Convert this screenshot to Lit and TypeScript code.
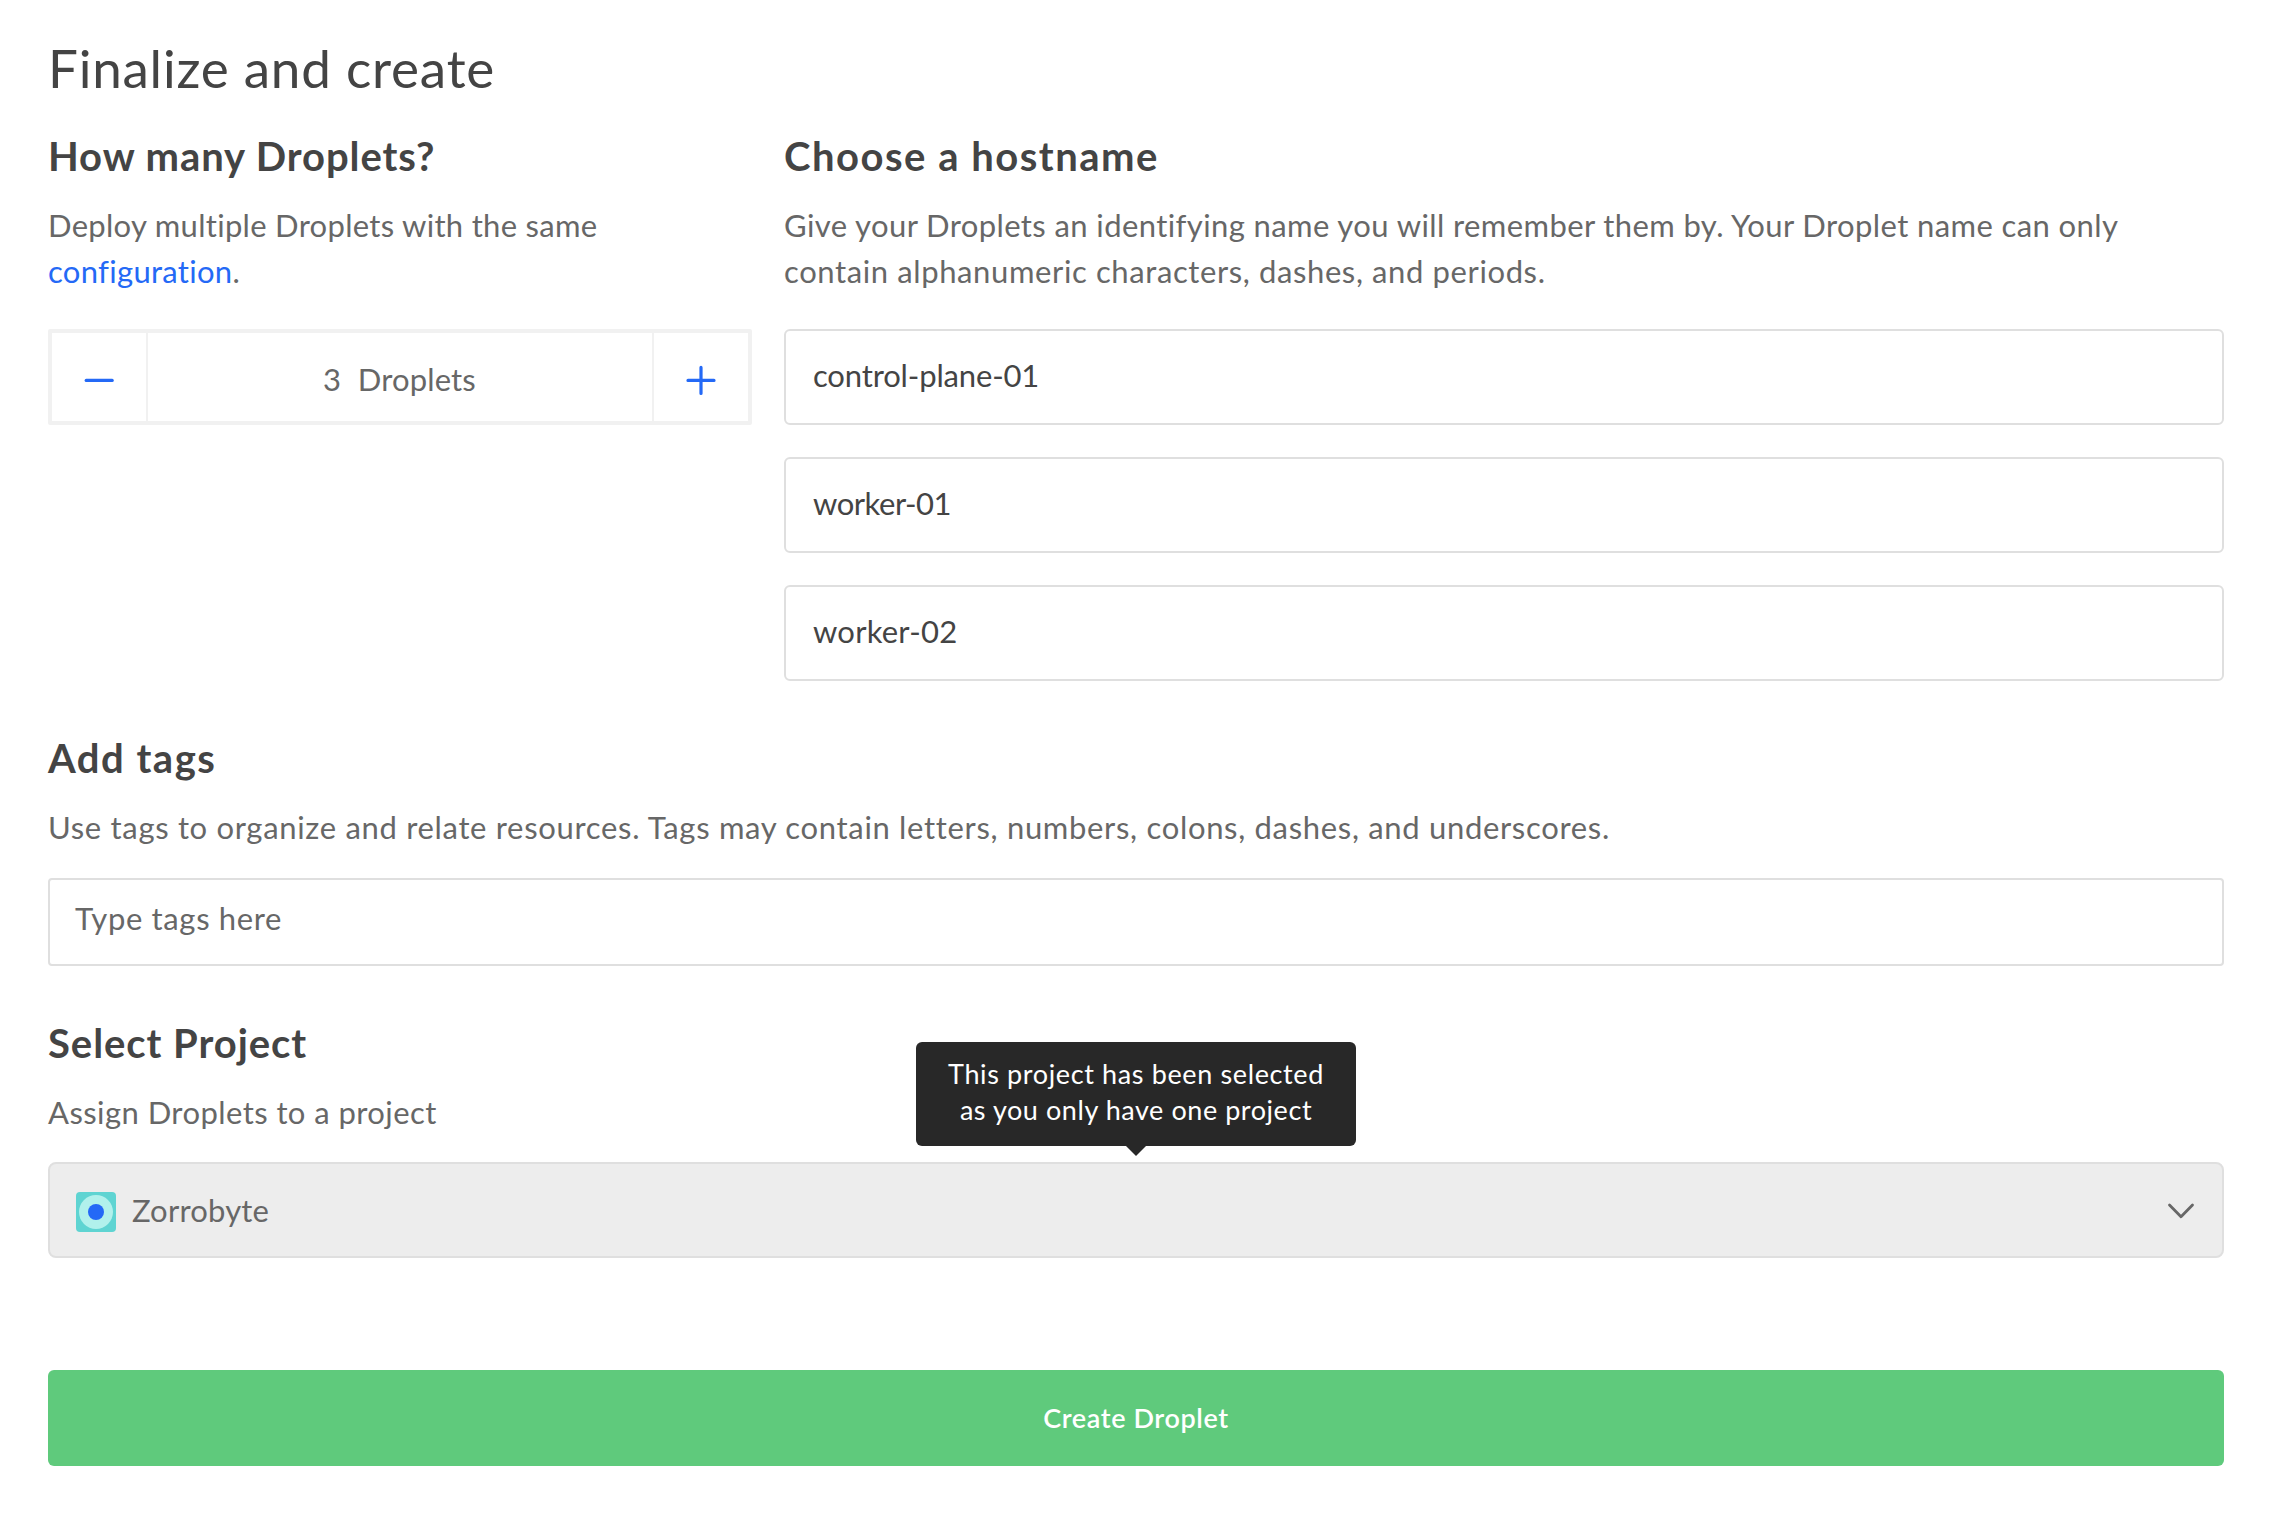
import { LitElement, html, css, svg } from "lit";
import { customElement, state } from "lit/decorators.js";

const minusIcon = svg`<path d="M2.2 15.4H28.2" />`;
const plusIcon = svg`<path d="M2 15.4H28M15 2.4V28.4" />`;

@customElement("app-root")
export class AppRoot extends LitElement {
  @state() private hostnames = ["control-plane-01", "worker-01", "worker-02"];

  static styles = css`
    :host {
      display: block;
      background: #fff;
      font-family: Lato, "Open Sans", sans-serif;
      font-size: 31px;
      line-height: 46px;
      color: #676767;
    }
    * {
      box-sizing: border-box;
    }
    .page {
      display: flex;
      flex-direction: column;
      min-height: 1534px;
      padding: 38px 66px 0 48px;
    }
    h1,
    h2,
    p {
      margin: 0;
      white-space: nowrap;
    }
    h1 {
      font-size: 53px;
      line-height: 60px;
      font-weight: 400;
      letter-spacing: 0.78px;
      color: #444;
    }
    h2 {
      font-size: 40px;
      line-height: 48px;
      font-weight: 700;
      letter-spacing: 0.92px;
      color: #444;
      margin-bottom: 22px;
    }
    .h-host {
      letter-spacing: 1.5px;
    }
    .h-tags {
      letter-spacing: 1.5px;
    }
    .h-project {
      letter-spacing: 0.95px;
    }
    .line {
      display: block;
    }
    .ls-deploy {
      letter-spacing: 0.3px;
    }
    .ls-give {
      letter-spacing: 0.4px;
    }
    .ls-contain {
      letter-spacing: 0.61px;
    }
    .ls-use {
      letter-spacing: 0.68px;
    }
    .ls-assign {
      letter-spacing: 0.43px;
    }
    a {
      color: #2469f6;
      text-decoration: none;
    }
    .columns {
      display: grid;
      grid-template-columns: 704px 1fr;
      gap: 32px;
      margin-top: 34px;
    }
    .stepper {
      display: grid;
      grid-template-columns: 94px 1fr 94px;
      height: 96px;
      margin-top: 35px;
      border: 4px solid #f1f1f1;
      border-radius: 2px;
    }
    .step {
      display: flex;
      align-items: center;
      justify-content: center;
      padding: 7px 0 0;
      margin: 0;
      border: 0;
      background: none;
      font: inherit;
    }
    .step svg {
      width: 31px;
      height: 32px;
      fill: none;
      stroke: #2469f6;
      stroke-width: 3.2;
      stroke-linecap: round;
    }
    .count {
      display: flex;
      align-items: center;
      justify-content: center;
      gap: 16.5px;
      padding: 3px 1px 0 0;
      border: solid #f1f1f1;
      border-width: 0 2px;
      letter-spacing: 0.15px;
    }
    .hosts {
      display: flex;
      flex-direction: column;
      gap: 32px;
      margin-top: 35px;
    }
    .field {
      display: flex;
      align-items: center;
      height: 96px;
      padding: 0 27px 4px;
      border: 2px solid #dfdfdf;
      border-radius: 6px;
      color: #444;
    }
    .host-0 {
      letter-spacing: -0.15px;
    }
    .host-1 {
      letter-spacing: -0.47px;
    }
    .host-2 {
      letter-spacing: 0.22px;
    }
    .section {
      margin-top: 53px;
    }
    .tags {
      height: 88px;
      margin-top: 28px;
      padding: 0 25px 8px;
      border-radius: 4px;
      color: #676767;
      letter-spacing: 0.65px;
    }
    .select {
      position: relative;
      margin-top: 27px;
      padding: 0 27px 0 26px;
      border-radius: 8px;
      background: #ededed;
      color: #676767;
      letter-spacing: 0.2px;
    }
    .avatar {
      width: 40px;
      height: 40px;
      margin: 4px 16px 0 0;
    }
    .chevron {
      width: 28px;
      height: 28px;
      margin: 2px 0 0 auto;
      fill: none;
      stroke: #676767;
      stroke-width: 2.8;
      stroke-linecap: round;
      stroke-linejoin: round;
    }
    .tooltip {
      position: absolute;
      top: -122px;
      left: calc(50% - 220px);
      width: 440px;
      height: 104px;
      padding-top: 14px;
      border-radius: 6px;
      background: #282828;
      color: #fff;
      font-size: 27px;
      line-height: 36px;
      text-align: center;
      white-space: nowrap;
    }
    .tooltip::after {
      content: "";
      position: absolute;
      top: 104px;
      left: 210px;
      border: 10px solid transparent;
      border-top-color: #282828;
      border-bottom: 0;
    }
    .tip-1 {
      letter-spacing: 0.63px;
    }
    .tip-2 {
      letter-spacing: 0.56px;
    }
    .create {
      height: 96px;
      margin: 112px 0 0;
      border: 0;
      border-radius: 6px;
      background: #5fca7c;
      color: #fff;
      font: 600 27px/36px Lato, "Open Sans", sans-serif;
      letter-spacing: 0.6px;
    }
  `;

  render() {
    return html`
      <main class="page">
        <h1>Finalize and create</h1>
        <div class="columns">
          <section>
            <h2>How many Droplets?</h2>
            <p>
              <span class="line ls-deploy">Deploy multiple Droplets with the same</span>
              <span class="line ls-deploy"><a>configuration</a>.</span>
            </p>
            <div class="stepper">
              <button class="step" aria-label="Remove">
                <svg viewBox="0 0 31 32">${minusIcon}</svg>
              </button>
              <div class="count">
                <span>${this.hostnames.length}</span><span>Droplets</span>
              </div>
              <button class="step" aria-label="Add">
                <svg viewBox="0 0 31 32">${plusIcon}</svg>
              </button>
            </div>
          </section>
          <section>
            <h2 class="h-host">Choose a hostname</h2>
            <p>
              <span class="line ls-give"
                >Give your Droplets an identifying name you will remember them by. Your Droplet name can only</span
              >
              <span class="line ls-contain">contain alphanumeric characters, dashes, and periods.</span>
            </p>
            <div class="hosts">
              ${this.hostnames.map((name, i) => html`<div class="field host-${i}">${name}</div>`)}
            </div>
          </section>
        </div>

        <section class="section">
          <h2 class="h-tags">Add tags</h2>
          <p class="ls-use">
            Use tags to organize and relate resources. Tags may contain letters, numbers, colons, dashes, and
            underscores.
          </p>
          <div class="field tags">Type tags here</div>
        </section>

        <section class="section">
          <h2 class="h-project">Select Project</h2>
          <p class="ls-assign">Assign Droplets to a project</p>
          <div class="field select">
            <svg class="avatar" viewBox="0 0 40 40">
              <rect width="40" height="40" rx="4" fill="#5fd4d2" />
              <circle cx="20" cy="20" r="17" fill="#b1f1ec" />
              <circle cx="20" cy="20" r="8" fill="#2469f6" />
            </svg>
            <span>Zorrobyte</span>
            <svg class="chevron" viewBox="0 0 28 28"><path d="M2.5 8L14 19.8L25.5 8" /></svg>
            <div class="tooltip" role="tooltip">
              <span class="line tip-1">This project has been selected</span>
              <span class="line tip-2">as you only have one project</span>
            </div>
          </div>
        </section>

        <button class="create">Create Droplet</button>
      </main>
    `;
  }
}
